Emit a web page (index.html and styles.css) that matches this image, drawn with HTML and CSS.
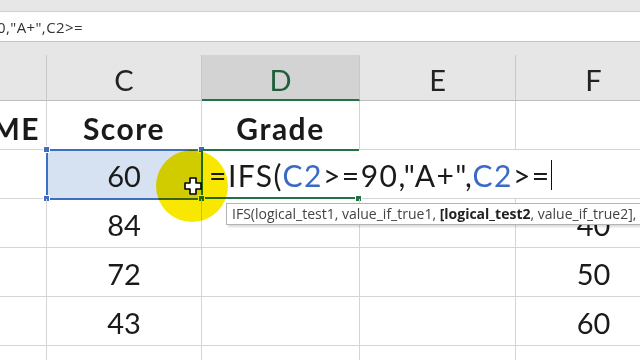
FILE: index.html
```html
<!DOCTYPE html>
<html lang="en">
  <head>
    <meta charset="UTF-8" />
    <title>IFS formula</title>
    <link rel="stylesheet" href="styles.css">
  </head>
  <body>
    <!-- formula bar -->
    <div class="topbar"></div>
    <div class="formula-bar"><span class="formula-text">0,"A+",C2&gt;=</span></div>
    <div class="gap"></div>

    <div class="sheet">
      <!-- column headers -->
      <div class="cell head"></div>
      <div class="cell head">C</div>
      <div class="cell head active">D</div>
      <div class="cell head">E</div>
      <div class="cell head">F</div>

      <!-- row 1 -->
      <div class="cell title clip"><span>NAME</span></div>
      <div class="cell title">Score</div>
      <div class="cell title">Grade</div>
      <div class="cell"></div>
      <div class="cell"></div>

      <!-- row 2 (editing) -->
      <div class="cell"></div>
      <div class="cell num sel">60
        <i class="handle h-tl"></i>
        <i class="handle h-bl"></i>
        <i class="handle h-tr"></i>
      </div>
      <div class="cell edit">
        <span>=IFS(<b class="ref">C2</b>&gt;=90,"A+",<b class="ref">C2</b>&gt;=</span><i class="caret"></i>
        <i class="handle green h-bl"></i>
        <i class="handle green h-br"></i>
      </div>

      <!-- row 3 -->
      <div class="cell"></div>
      <div class="cell num">84</div>
      <div class="cell"></div>
      <div class="cell"></div>
      <div class="cell num">40</div>

      <!-- row 4 -->
      <div class="cell"></div>
      <div class="cell num">72</div>
      <div class="cell"></div>
      <div class="cell"></div>
      <div class="cell num">50</div>

      <!-- row 5 -->
      <div class="cell"></div>
      <div class="cell num">43</div>
      <div class="cell"></div>
      <div class="cell"></div>
      <div class="cell num">60</div>

      <!-- row 6, only its top edge is on screen -->
      <div class="cell"></div>
      <div class="cell"></div>
      <div class="cell"></div>
      <div class="cell"></div>
      <div class="cell"></div>
    </div>

    <!-- screen tip -->
    <div class="tooltip">IFS(logical_test1, value_if_true1, <b>[logical_test2</b>, value_if_true2], ...)</div>

    <!-- mouse highlight -->
    <div class="spot"></div>
    <svg class="pointer" width="18" height="18" viewBox="0 0 18 18">
      <polygon points="6,1 12,1 12,6 17,6 17,12 12,12 12,17 6,17 6,12 1,12 1,6 6,6" fill="#fff" stroke="#000" stroke-width="1.6" stroke-linejoin="round" />
    </svg>
  </body>
</html>
```

FILE: styles.css
```css
html,
body {
  margin: 0;
  padding: 0;
}
body {
  width: 640px;
  height: 360px;
  overflow: hidden;
  position: relative;
  background: #fff;
  font-family: Lato, "Open Sans", sans-serif;
  color: #1a1a1a;
}
.topbar {
  height: 11px;
  background: #e7e7e7;
  border-bottom: 1px solid #d0d0d0;
}
.formula-bar {
  height: 29px;
  background: #fff;
  border-bottom: 1px solid #c4c4c4;
  display: flex;
  align-items: center;
}
.formula-text {
  font-family: "Open Sans", sans-serif;
  font-size: 15px;
  letter-spacing: 0.4px;
  color: #333;
  margin-left: -3px;
}
.gap {
  height: 13px;
  background: #e6e6e6;
}

/* ----- grid ----- */
.sheet {
  display: grid;
  grid-template-columns: 47px 155px 158px 156px 156px;
  grid-template-rows: 46px repeat(5, 49px) 20px;
  width: 672px;
}
.cell {
  box-sizing: border-box;
  border-right: 1px solid #d4d4d4;
  border-bottom: 1px solid #d4d4d4;
  display: flex;
  align-items: center;
  justify-content: center;
  font-size: 29px;
  position: relative;
}
.head {
  background: #e6e6e6;
  border-right-color: #c8c8c8;
  border-bottom-color: #bdbdbd;
  font-size: 29px;
  color: #222;
  padding-top: 4px;
}
.head.active {
  background: #d3d3d3;
  color: #1e5e3b;
  border-bottom: 2px solid #217346;
}
.title {
  font-weight: bold;
  font-size: 30px;
  letter-spacing: 1.5px;
  padding-top: 6px;
}
.clip {
  overflow: hidden;
  justify-content: flex-end;
  padding-right: 6px;
}
.num {
  padding-top: 2px;
}

/* ----- selection ----- */
.sel {
  background: #d6e1f2;
  outline: 2px solid #3e6dc1;
  outline-offset: -1px;
}
.handle {
  position: absolute;
  width: 5px;
  height: 5px;
  background: #3e6dc1;
  border: 1px solid #fff;
}
.h-tl {
  left: -4px;
  top: -4px;
}
.h-bl {
  left: -4px;
  bottom: -4px;
}
.h-tr {
  right: -4px;
  top: -4px;
}
.handle.green {
  background: #217346;
}
.edit .h-br {
  left: 153px;
  bottom: -4px;
}

/* ----- cell in edit mode ----- */
.edit {
  grid-column: span 3;
  justify-content: flex-start;
  padding-left: 7px;
  padding-top: 2px;
  border-right: none;
  background: #fff;
  font-size: 30px;
  letter-spacing: 1.5px;
}
.edit::before {
  content: "";
  position: absolute;
  left: -1px;
  top: -1px;
  bottom: -1px;
  width: 158px;
  border: 2px solid #217346;
  border-right: none;
  box-sizing: border-box;
}
.ref {
  font-weight: normal;
  color: #3a6ac4;
}
.caret {
  display: inline-block;
  width: 1px;
  height: 30px;
  background: #111;
}

/* ----- screen tip ----- */
.tooltip {
  position: absolute;
  left: 226px;
  top: 203px;
  height: 22px;
  line-height: 20px;
  box-sizing: border-box;
  padding: 0 5px;
  background: #fff;
  border: 1px solid #b4b4b4;
  box-shadow: 2px 2px 2px rgba(0, 0, 0, 0.15);
  font-family: "Open Sans", sans-serif;
  font-size: 14px;
  color: #444;
  white-space: nowrap;
}
.tooltip b {
  color: #222;
}

/* ----- mouse highlight ----- */
.spot {
  position: absolute;
  left: 156px;
  top: 150px;
  width: 72px;
  height: 72px;
  border-radius: 50%;
  background: #f8e700;
  mix-blend-mode: multiply;
}
.pointer {
  position: absolute;
  left: 184px;
  top: 177px;
}
```
